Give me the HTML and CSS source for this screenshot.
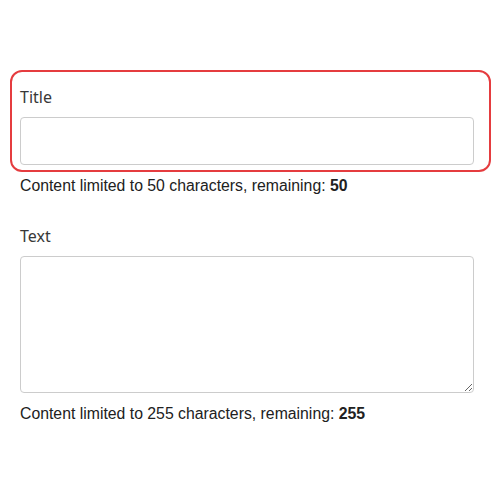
FILE: index.html
```html
<!DOCTYPE html>
<html>
<head>
<meta charset="utf-8">
<link rel="stylesheet" href="styles.css">
</head>
<body>
<div class="form">
  <div class="field field-focus">
    <label class="label" for="title">Title</label>
    <input class="control input" id="title" type="text">
  </div>
  <p class="hint">Content limited to 50 characters, remaining: <strong>50</strong></p>
  <div class="field">
    <label class="label" for="text">Text</label>
    <textarea class="control textarea" id="text"></textarea>
  </div>
  <p class="hint">Content limited to 255 characters, remaining: <strong>255</strong></p>
</div>
</body>
</html>
```
FILE: styles.css
```css
html, body {
  margin: 0;
  padding: 0;
  background: #ffffff;
}
.form {
  padding-top: 70px;
  width: 500px;
}
.field {
  display: flex;
  flex-direction: column;
  gap: 8px;
  margin-left: 10px;
  width: 481px;
  box-sizing: border-box;
  padding: 13px 15px 5px 8px;
  border: 2px solid transparent;
  border-radius: 12px;
}
.field-focus {
  border-color: #e53c3f;
}
.label {
  font-family: "Noto Sans", sans-serif;
  font-size: 16px;
  line-height: 24px;
  color: #383838;
}
.control {
  display: block;
  width: 100%;
  box-sizing: border-box;
  border: 1px solid #cccccc;
  border-radius: 4px;
  background: #ffffff;
  margin: 0;
  font-family: "Liberation Sans", sans-serif;
  font-size: 15px;
}
.input {
  height: 48px;
}
.textarea {
  height: 137px;
  resize: vertical;
}
.hint {
  margin: 4px 0 13px 20px;
  font-family: "Liberation Sans", Arial, sans-serif;
  font-size: 15.8px;
  line-height: 20px;
  color: #212121;
}
.hint strong {
  font-weight: bold;
}
```
